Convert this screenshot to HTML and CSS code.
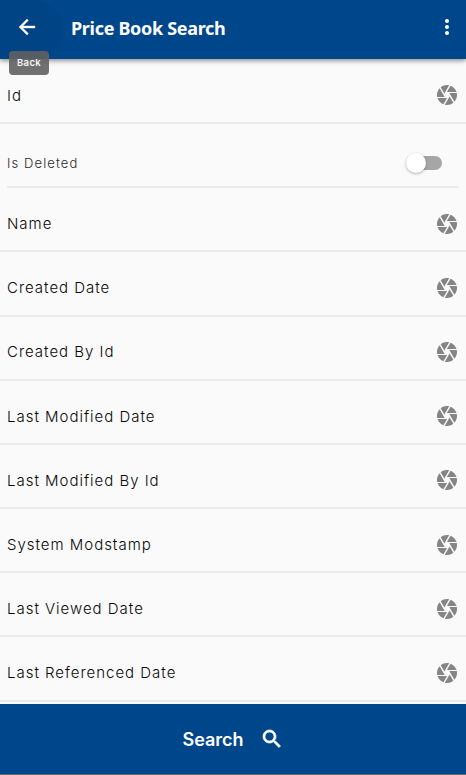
FILE: index.html
```
<!DOCTYPE html>
<html lang="en">
<head>
<meta charset="utf-8">
<title>Price Book Search</title>
<link rel="stylesheet" href="styles.css">
</head>
<body>
<svg class="defs" aria-hidden="true"><symbol id="camera" viewBox="0 0 24 24"><path d="M9.4 10.5l4.77-8.26C13.47 2.09 12.75 2 12 2c-2.4 0-4.6.85-6.32 2.25l3.66 6.35.06-.1zM21.54 9c-.92-2.92-3.15-5.26-6-6.34L11.88 9h9.66zm.26 1h-7.49l.29.5 4.76 8.25C21 16.97 22 14.61 22 12c0-.69-.07-1.35-.2-2zM8.54 12l-3.9-6.75C3.01 7.03 2 9.39 2 12c0 .69.07 1.35.2 2h7.49l-1.15-2zm-6.08 3c.92 2.92 3.15 5.26 6 6.34L12.12 15H2.46zm11.27 0l-3.9 6.76c.7.15 1.42.24 2.17.24 2.4 0 4.6-.85 6.32-2.25l-3.66-6.35-.93 1.6z"/></symbol></svg>
<div class="app">
  <header class="bar">
    <button class="back" aria-label="Back"><svg class="icon" viewBox="0 0 24 24"><path d="M20 11H7.83l5.59-5.59L12 4l-8 8 8 8 1.41-1.41L7.83 13H20v-2z"/></svg><span class="tip">Back</span></button>
    <h1 class="title"><span>Price Book Search</span></h1>
    <button class="more" aria-label="More"><svg class="icon" viewBox="0 0 24 24"><path d="M12 8c1.1 0 2-.9 2-2s-.9-2-2-2-2 .9-2 2 .9 2 2 2zm0 2c-1.1 0-2 .9-2 2s.9 2 2 2 2-.9 2-2-.9-2-2-2zm0 6c-1.1 0-2 .9-2 2s.9 2 2 2 2-.9 2-2-.9-2-2-2z"/></svg></button>
  </header>
  <main class="list">
    <div class="row"><span>Id</span><svg class="icon"><use href="#camera"/></svg></div>
    <div class="row check"><span class="small">Is Deleted</span><i class="switch"></i></div>
    <div class="row"><span>Name</span><svg class="icon"><use href="#camera"/></svg></div>
    <div class="row"><span>Created Date</span><svg class="icon"><use href="#camera"/></svg></div>
    <div class="row"><span>Created By Id</span><svg class="icon"><use href="#camera"/></svg></div>
    <div class="row"><span>Last Modified Date</span><svg class="icon"><use href="#camera"/></svg></div>
    <div class="row"><span>Last Modified By Id</span><svg class="icon"><use href="#camera"/></svg></div>
    <div class="row"><span>System Modstamp</span><svg class="icon"><use href="#camera"/></svg></div>
    <div class="row"><span>Last Viewed Date</span><svg class="icon"><use href="#camera"/></svg></div>
    <div class="row"><span>Last Referenced Date</span><svg class="icon"><use href="#camera"/></svg></div>
  </main>
  <button class="search"><span>Search</span><svg class="icon" viewBox="0 0 24 24"><path d="M15.5 14h-.79l-.28-.27C15.41 12.59 16 11.11 16 9.5 16 5.91 13.09 3 9.5 3S3 5.91 3 9.5 5.91 16 9.5 16c1.61 0 3.09-.59 4.23-1.57l.27.28v.79l5 4.99L20.49 19l-4.99-5zm-6 0C7.01 14 5 11.99 5 9.5S7.01 5 9.5 5 14 7.01 14 9.5 11.99 14 9.5 14z"/></svg></button>
</div>
</body>
</html>
```
FILE: styles.css
```
* { box-sizing: border-box; }
body { margin: 0; background: #fafafa; color: #080808; font-family: Inter, sans-serif; }
button { border: 0; padding: 0; color: #fff; font-family: inherit; background: none; }
.defs { position: absolute; width: 0; height: 0; }
.icon { width: 24px; height: 24px; fill: currentColor; display: block; flex: none; }
.app { display: flex; flex-direction: column; height: 775px; overflow: hidden; }
.bar { position: relative; z-index: 1; display: flex; align-items: center; flex: none; height: 59px; background: #00468b; color: #fff; box-shadow: 0 2px 4px rgba(0,0,0,.3), 0 1px 7px rgba(0,0,0,.18); }
.back { position: relative; display: flex; align-items: center; width: 63px; height: 59px; padding: 0 0 5px 15px; background: #004485; border-radius: 0 30px 30px 0; }
.back .icon { stroke: currentColor; stroke-width: .4; }
.tip { position: absolute; left: 9px; top: 51px; width: 40px; height: 24px; border-radius: 4px; background: rgba(97,97,97,.9); font-size: 9.5px; font-weight: 600; line-height: 23px; letter-spacing: .3px; text-align: center; color: #f4f4f4; }
.title { flex: 1; margin: 0 0 4px 8px; font: 700 18px/24px "Noto Sans", sans-serif; letter-spacing: -.31px; }
.more { margin: 0 7px 5px 0; }
.list { display: grid; grid-template-rows: repeat(10, 64.2px); flex: none; height: 645px; padding-top: .8px; }
.row { display: flex; align-items: center; justify-content: space-between; padding: 8.6px 7px 0; border-bottom: 2px solid #e9ebed; font-size: 15px; font-weight: 300; letter-spacing: .98px; }
.row .icon { color: #858585; }
.check { margin: 0 7px; padding: 15px 0 0; }
.small { font-size: 13px; letter-spacing: 1.1px; color: #2c2c2c; }
.switch { position: relative; width: 33px; height: 14px; margin-right: 17px; border-radius: 7px; background: #a6a6a6; }
.switch::before { content: ""; position: absolute; left: -3px; top: -3px; width: 20px; height: 20px; border-radius: 50%; background: #fff; box-shadow: 0 1px 3px rgba(0,0,0,.3); }
.search { display: flex; align-items: center; justify-content: center; flex: 1; gap: 16px; border-bottom: 1px solid #686868; background: #00468b; font-size: 18px; font-weight: 600; }
.search .icon { stroke: currentColor; stroke-width: .7; }
```
